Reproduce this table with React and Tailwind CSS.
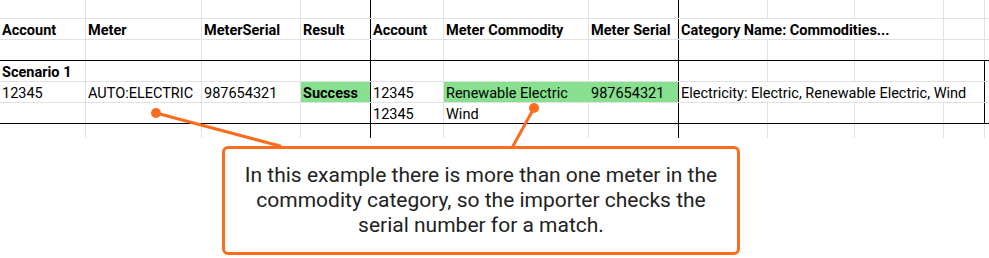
import clsx from "clsx";

// column widths of the sheet, gridline included (A..K, then the overflow strip)
const W = {
  A: "w-[86px]",
  B: "w-[116px]",
  C: "w-[99px]",
  D: "w-[70px]",
  E: "w-[73px]",
  F: "w-[145px]",
  G: "w-[90px]",
  H: "w-[89px]",
  I: "w-[87px]",
  J: "w-[89px]",
  K: "w-[41px]",
  HJ: "w-[265px]",
  HK: "w-[306px]",
};

const GRID = "border-[#e1e1e1]";
const INK = "border-black";
const GREEN = "bg-[#86e08e]";

function Cell({ w, text, bold, fill, edge = GRID }) {
  return (
    <div
      className={clsx(
        "flex shrink-0 items-end overflow-visible whitespace-nowrap border-r pl-[2px] leading-[16px]",
        w,
        edge,
        fill,
        bold && "font-bold"
      )}
    >
      {text}
    </div>
  );
}

function Row({ h = "h-[21px]", line = GRID, children }) {
  return (
    <div className={clsx("flex border-b", h, line)}>
      {children}
      <div className="flex-1" />
    </div>
  );
}

function Sheet() {
  return (
    <div className="font-['Roboto',sans-serif] text-[14.5px] text-black">
      <Row h="h-[19px]">
        <Cell w={W.A} />
        <Cell w={W.B} />
        <Cell w={W.C} />
        <Cell w={W.D} edge={INK} />
        <Cell w={W.E} />
        <Cell w={W.F} />
        <Cell w={W.G} edge={INK} />
        <Cell w={W.H} />
        <Cell w={W.I} />
        <Cell w={W.J} />
        <Cell w={W.K} />
      </Row>
      <Row>
        <Cell w={W.A} text="Account" bold />
        <Cell w={W.B} text="Meter" bold />
        <Cell w={W.C} text="MeterSerial" bold />
        <Cell w={W.D} text="Result" bold edge={INK} />
        <Cell w={W.E} text="Account" bold />
        <Cell w={W.F} text="Meter Commodity" bold />
        <Cell w={W.G} text="Meter Serial" bold edge={INK} />
        <Cell w={W.HJ} text="Category Name: Commodities..." bold />
        <Cell w={W.K} />
      </Row>
      <Row line={INK}>
        <Cell w={W.A} />
        <Cell w={W.B} />
        <Cell w={W.C} />
        <Cell w={W.D} edge={INK} />
        <Cell w={W.E} />
        <Cell w={W.F} />
        <Cell w={W.G} edge={INK} />
        <Cell w={W.H} />
        <Cell w={W.I} />
        <Cell w={W.J} />
        <Cell w={W.K} />
      </Row>
      <Row>
        <Cell w={W.A} text="Scenario 1" bold />
        <Cell w={W.B} />
        <Cell w={W.C} />
        <Cell w={W.D} edge={INK} />
        <Cell w={W.E} />
        <Cell w={W.F} />
        <Cell w={W.G} edge={INK} />
        <Cell w={W.H} />
        <Cell w={W.I} />
        <Cell w={W.J} />
        <Cell w={W.K} edge={INK} />
      </Row>
      <Row>
        <Cell w={W.A} text="12345" />
        <Cell w={W.B} text="AUTO:ELECTRIC" />
        <Cell w={W.C} text="987654321" />
        <Cell w={W.D} text="Success" bold fill={GREEN} edge={INK} />
        <Cell w={W.E} text="12345" />
        <Cell w={W.F} text="Renewable Electric" fill={GREEN} edge="border-[#86e08e]" />
        <Cell w={W.G} text="987654321" fill={GREEN} edge={INK} />
        <Cell w={W.HK} text="Electricity: Electric, Renewable Electric, Wind" edge={INK} />
      </Row>
      <Row line={INK}>
        <Cell w={W.A} />
        <Cell w={W.B} />
        <Cell w={W.C} />
        <Cell w={W.D} edge={INK} />
        <Cell w={W.E} text="12345" />
        <Cell w={W.F} text="Wind" />
        <Cell w={W.G} edge={INK} />
        <Cell w={W.H} />
        <Cell w={W.I} />
        <Cell w={W.J} />
        <Cell w={W.K} edge={INK} />
      </Row>
      <div className="flex h-[14px]">
        <Cell w={W.A} />
        <Cell w={W.B} />
        <Cell w={W.C} />
        <Cell w={W.D} edge={INK} />
        <Cell w={W.E} />
        <Cell w={W.F} />
        <Cell w={W.G} edge={INK} />
        <Cell w={W.H} />
        <Cell w={W.I} />
        <Cell w={W.J} />
        <Cell w={W.K} />
      </div>
    </div>
  );
}

// orange pointers from the callout up to the cells it talks about
function Pointers() {
  return (
    <svg
      className="pointer-events-none absolute left-0 top-0"
      width="989"
      height="258"
      viewBox="0 0 989 258"
    >
      <g stroke="#fb6d1d" strokeWidth="3" strokeLinecap="round" fill="#fb6d1d">
        <line x1="156" y1="113" x2="280" y2="146" />
        <line x1="534" y1="108" x2="513" y2="146" />
        <circle cx="156" cy="113" r="3.5" />
        <circle cx="534" cy="108" r="3.5" />
      </g>
    </svg>
  );
}

export default function App() {
  return (
    <div className="relative h-[258px] w-[989px] overflow-hidden bg-white">
      <Sheet />
      <div className="ml-[222px] mt-[8px] flex h-[109px] w-[518px] items-center justify-center rounded-[6px] border-[3px] border-[#fb6d1d] bg-white">
        <p className="text-center font-['Roboto',sans-serif] text-[21px] leading-[25px] text-[#222]">
          In this example there is more than one meter in the
          <br />
          commodity category, so the importer checks the
          <br />
          serial number for a match.
        </p>
      </div>
      <Pointers />
    </div>
  );
}
